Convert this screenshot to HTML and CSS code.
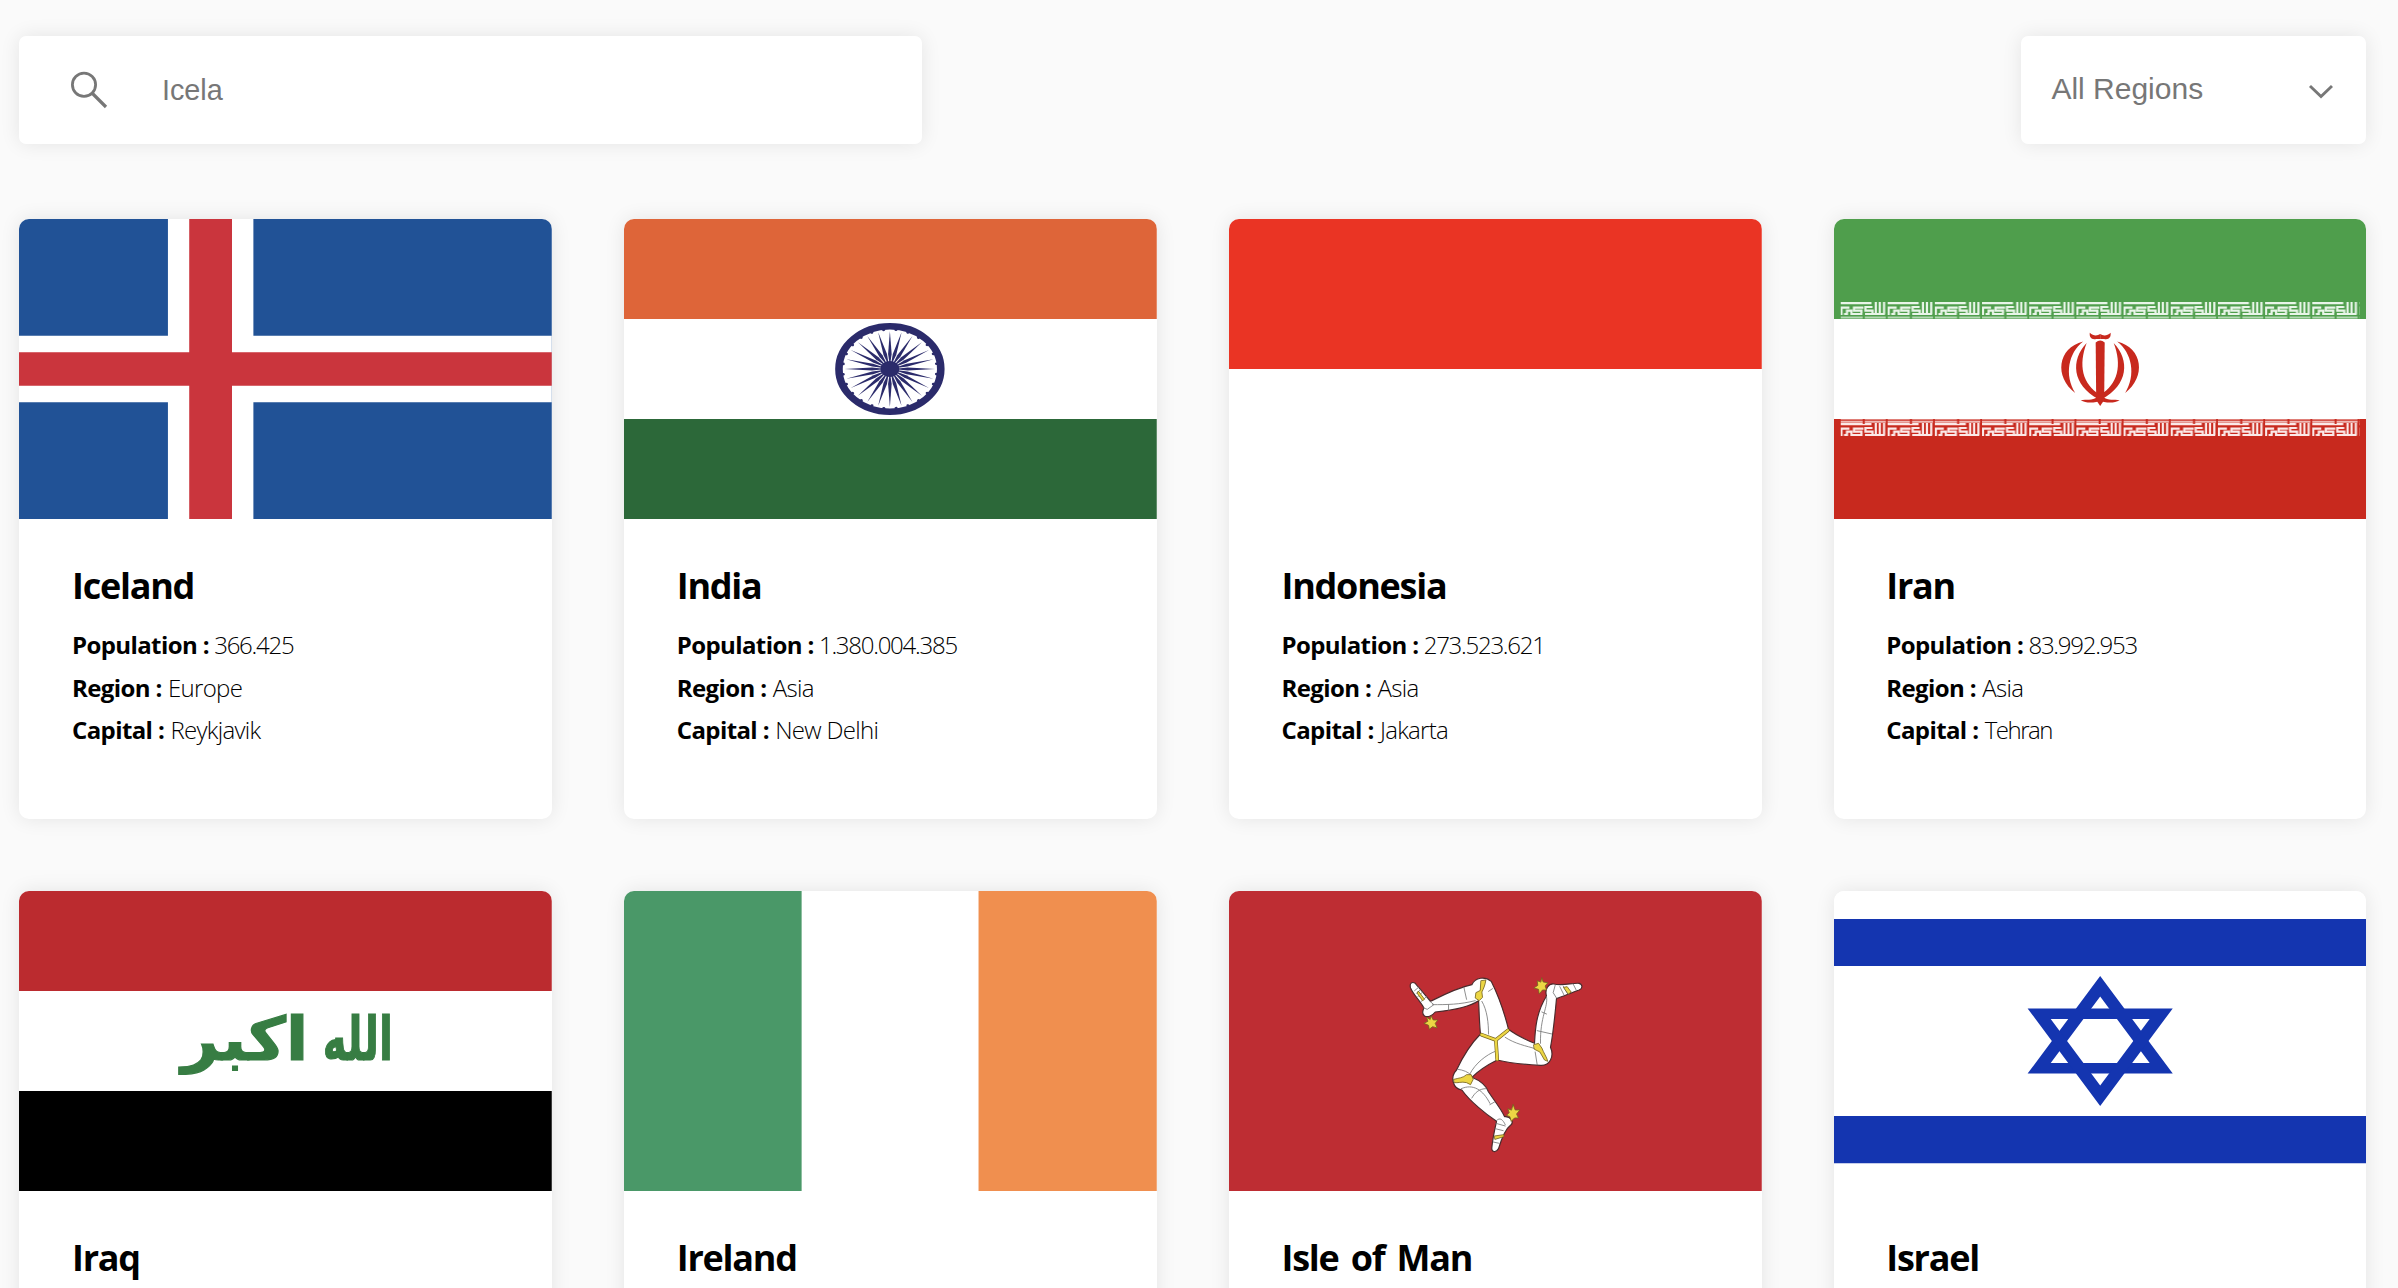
FILE: index.html
```html
<!DOCTYPE html>
<html lang="en">
<head>
<meta charset="utf-8">
<title>Countries</title>
<link rel="stylesheet" href="styles.css">
</head>
<body>
<main class="page">
  <div class="toolbar">
    <label class="search">
      <svg class="search-icon" viewBox="0 0 38 38" width="38" height="38" fill="none" stroke="#777" stroke-width="2.8"><circle cx="14" cy="13.7" r="11.6"/><path d="M22 22 36 36" stroke-width="3.2"/></svg>
      <input class="search-input" type="text" value="Icela">
    </label>
    <div class="select">
      <span class="select-label">All Regions</span>
      <svg class="chevron" viewBox="0 0 26 16" width="26" height="16" fill="none" stroke="#777" stroke-width="2.9"><path d="M2 2 13 12.5 24 2"/></svg>
    </div>
  </div>

  <div class="grid">
    <article class="card">
      <svg class="flag" viewBox="0 0 533 300" preserveAspectRatio="none">
        <rect width="533" height="300" fill="#215296"/>
        <path fill="#fff" d="M149 0h85.5v300H149zM0 116.7h533v66.6H0z"/>
        <path fill="#ca353d" d="M170.3 0h42.8v300h-42.8zM0 133.3h533v33.4H0z"/>
      </svg>
      <div class="body">
        <h2 class="name">Iceland</h2>
        <p class="meta"><b>Population :</b> <span class="number">366.425</span></p>
        <p class="meta"><b>Region :</b> <span>Europe</span></p>
        <p class="meta"><b>Capital :</b> <span>Reykjavik</span></p>
      </div>
    </article>

    <article class="card">
      <svg class="flag" viewBox="0 0 533 300" preserveAspectRatio="none">
        <rect width="533" height="300" fill="#fff"/>
        <rect width="533" height="100" fill="#de6539"/>
        <rect y="200" width="533" height="100" fill="#2c6839"/>
        <defs>
          <g id="spoke"><path d="M0-38 1.5-15 .5-7H-.5L-1.5-15z"/><circle cx="5.1" cy="-39.2" r="1.3"/></g>
          <g id="spokes6"><use href="#spoke"/><use href="#spoke" transform="rotate(15)"/><use href="#spoke" transform="rotate(30)"/><use href="#spoke" transform="rotate(45)"/><use href="#spoke" transform="rotate(60)"/><use href="#spoke" transform="rotate(75)"/></g>
        </defs>
        <g transform="translate(266 150) scale(1.19 1)" fill="#2b2b6b">
          <circle r="42.8" fill="none" stroke="#2b2b6b" stroke-width="6.4"/>
          <circle r="8"/>
          <use href="#spokes6"/><use href="#spokes6" transform="rotate(90)"/><use href="#spokes6" transform="rotate(180)"/><use href="#spokes6" transform="rotate(270)"/>
        </g>
      </svg>
      <div class="body">
        <h2 class="name">India</h2>
        <p class="meta"><b>Population :</b> <span class="number">1.380.004.385</span></p>
        <p class="meta"><b>Region :</b> <span>Asia</span></p>
        <p class="meta"><b>Capital :</b> <span>New Delhi</span></p>
      </div>
    </article>

    <article class="card">
      <svg class="flag" viewBox="0 0 533 300" preserveAspectRatio="none">
        <rect width="533" height="300" fill="#fff"/>
        <rect width="533" height="150" fill="#ea3424"/>
      </svg>
      <div class="body">
        <h2 class="name">Indonesia</h2>
        <p class="meta"><b>Population :</b> <span class="number">273.523.621</span></p>
        <p class="meta"><b>Region :</b> <span>Asia</span></p>
        <p class="meta"><b>Capital :</b> <span>Jakarta</span></p>
      </div>
    </article>

    <article class="card">
      <svg class="flag" viewBox="0 0 533 300" preserveAspectRatio="none">
        <defs>
          <g id="band" fill="none" stroke-width="2.2">
            <path d="M0 1.1H31M1 13V5.6H9M3.5 12H6M6.5 13V8.6H11V12H21V8.6H13.5V5.6H23M24.5 12H32V8.6H25V5H32M35.3 0V12M39.3 0V12M43.6 0V12M30 12H44.5"/>
          </g>
          <pattern id="bandGreen" width="47.2" height="17" patternUnits="userSpaceOnUse" patternTransform="translate(6.5 83)">
            <use href="#band" stroke="#e9f5e9"/>
            <path d="M0 15.6H47.2" stroke="#b4d8b3" stroke-width="2"/>
            <path d="M23.3 11V17M46.4 0V17" stroke="#4f9e4c" stroke-width="2"/>
          </pattern>
          <pattern id="bandRed" width="47.2" height="17" patternUnits="userSpaceOnUse" patternTransform="translate(6.5 200)">
            <path d="M0 .8H47.2" stroke="#df7f78" stroke-width="1.4"/>
            <path d="M0 2.9H47.2" stroke="#efb9b5" stroke-width="1.8"/>
            <use href="#band" y="4" stroke="#fbe9e8"/>
            <path d="M23.3 0V5M46.4 0V17" stroke="#c8291e" stroke-width="2"/>
          </pattern>
        </defs>
        <rect width="533" height="300" fill="#fff"/>
        <rect width="533" height="100" fill="#4f9e4c"/>
        <rect y="200" width="533" height="100" fill="#c8291e"/>
        <rect x="6.5" y="83" width="519.2" height="17" fill="url(#bandGreen)"/>
        <rect x="6.5" y="200" width="519.2" height="17" fill="url(#bandRed)"/>
        <g transform="translate(266.3 0)" fill="#c8291e">
          <g id="crescents">
            <path d="M-17 122.5C-43 129-46 158-25 174-36 156-32 134-17 122.5z"/>
            <path d="M-13.5 124C-30 141-28 166-2 180L0 176C-18 165-22 146-13.5 124z"/>
            <path d="M-10.4 113.8C-7 117-3 117 0 115V120H-4C-9 121-11 118-10.4 113.8z"/>
            <path d="M-19.5 181.3C-14 180-8 182-3 178L0 182-4 183C-9 184-15 184-19.5 181.3z"/>
          </g>
          <use href="#crescents" transform="scale(-1 1)"/>
          <path d="M-4.5 123.5Q0 119.5 4.5 123.5L4 181 0 187-4 181z"/>
        </g>
      </svg>
      <div class="body">
        <h2 class="name">Iran</h2>
        <p class="meta"><b>Population :</b> <span class="number">83.992.953</span></p>
        <p class="meta"><b>Region :</b> <span>Asia</span></p>
        <p class="meta"><b>Capital :</b> <span class="tight">Tehran</span></p>
      </div>
    </article>

    <article class="card">
      <svg class="flag" viewBox="0 0 533 300" preserveAspectRatio="none">
        <rect width="533" height="300" fill="#fff"/>
        <rect width="533" height="100" fill="#bb2b2f"/>
        <rect y="200" width="533" height="100" fill="#000"/>
        <g class="takbir">
          <text x="339" y="169" textLength="70" lengthAdjust="spacingAndGlyphs">الله</text>
          <text x="226" y="169" textLength="127" lengthAdjust="spacingAndGlyphs">اكبر</text>
        </g>
      </svg>
      <div class="body">
        <h2 class="name">Iraq</h2>
      </div>
    </article>

    <article class="card">
      <svg class="flag" viewBox="0 0 533 300" preserveAspectRatio="none">
        <rect width="533" height="300" fill="#fff"/>
        <rect width="177.7" height="300" fill="#4a9868"/>
        <rect x="354.7" width="178.3" height="300" fill="#f08f4f"/>
      </svg>
      <div class="body">
        <h2 class="name">Ireland</h2>
      </div>
    </article>

    <article class="card">
      <svg class="flag" viewBox="0 0 533 300" preserveAspectRatio="none">
        <rect width="533" height="300" fill="#be2d33"/>
        <g transform="translate(161 69) scale(.3333)" stroke-linejoin="round" stroke-linecap="round">
          <g fill="#fff" stroke="#4a2a2c" stroke-width="3.5">
            <path d="M318 240 272 222C268 190 268 150 266 122 240 140 190 150 136 156 128 166 114 174 104 168 96 162 98 152 102 144 90 122 70 104 62 84 58 70 66 64 76 70 92 88 108 108 122 124 150 110 200 84 246 74 256 52 286 48 304 64 322 100 344 160 356 208z"/>
            <path d="M318 240 356 208C376 224 410 240 434 250 436 210 438 160 470 108 464 88 476 70 492 72 520 78 548 68 568 70 580 74 578 86 568 90 544 98 524 108 500 116 496 160 490 220 482 262 494 290 480 318 452 316 410 314 360 310 322 300z"/>
            <path d="M318 240 322 300C290 316 262 336 246 352 276 364 290 380 296 396 312 420 336 450 344 470 362 468 374 486 362 496 348 506 334 540 326 566 318 580 304 576 306 562 308 540 314 510 320 484 290 464 240 424 216 390 188 386 180 350 200 330 216 296 244 250 272 222z"/>
          </g>
          <g fill="none" stroke="#777" stroke-width="2.5">
            <path d="M276 124C292 150 296 190 296 222M296 94 308 86M222 82 230 118M128 134C170 134 210 134 256 122M176 134V150M120 124 132 134 112 148 102 144M84 110 98 96M94 124 110 110M74 92 86 82M80 100 90 90"/>
            <path d="M346 232C376 252 410 258 436 266M436 276 442 314M442 212 486 222M470 110C476 140 450 170 452 250M456 156 470 162M496 76 490 98 500 114M510 80 522 104M520 78 534 102M550 72 560 92"/>
            <path d="M316 274C290 284 256 310 240 342M204 328C220 330 236 336 244 346M246 414C256 396 270 386 288 386M214 386C250 370 280 390 300 430M300 434 314 426M320 482C330 470 340 480 346 494M318 490 346 498M316 506 340 512M310 546 328 550"/>
          </g>
          <path d="M275 224 318 240 354 211M318 240 322 298" fill="none" stroke="#76641f" stroke-width="11"/>
          <path d="M275 224 318 240 354 211M318 240 322 298" fill="none" stroke="#ecd644" stroke-width="7"/>
          <g fill="#ecd644" stroke="#76641f" stroke-width="2.5">
            <path d="M274 62 288 60C286 76 280 88 276 96L278 112 268 122 256 114 258 98 270 92z"/>
            <path d="M432 254 446 250 456 264C462 280 470 290 474 304L464 300 450 276 434 268z"/>
            <path d="M192 358C206 354 220 354 230 344L244 344 250 358 242 374 230 368C214 364 204 370 194 368z"/>
            <path d="M86 94 104 118 98 122 82 100zM522 82 532 80 544 96 536 102zM314 528 342 524V530L316 538z"/>
            <path d="M124 168 130 180 144 180 136 190 142 204 128 200 118 208 116 196 102 190 114 184 110 172 120 178z"/>
            <path d="M456 54 460 66 474 68 466 78 470 90 458 90 448 102 446 88 432 84 444 76 442 62 452 66z"/>
            <path d="M370 434 376 450 390 450 380 462 386 474 374 474 364 484 360 470 350 466 358 458 354 446 364 450z"/>
          </g>
        </g>
      </svg>
      <div class="body">
        <h2 class="name">Isle of Man</h2>
      </div>
    </article>

    <article class="card">
      <svg class="flag" viewBox="0 0 533 300" preserveAspectRatio="none">
        <rect width="533" height="300" fill="#fff"/>
        <path fill="#1435b0" d="M0 28h533v47H0zM0 225h533v47.3H0z"/>
        <g transform="translate(266.3 150)" fill="#1435b0" fill-rule="evenodd">
          <path d="M0-65 72.6 32.6H-72.6zM0-44.5-49.5 22H49.5z"/>
          <path d="M0 65 72.6-32.6H-72.6zM0 44.5-49.5-22H49.5z"/>
        </g>
      </svg>
      <div class="body">
        <h2 class="name">Israel</h2>
      </div>
    </article>
  </div>
</main>
</body>
</html>
```
FILE: styles.css
```css
* {
  box-sizing: border-box;
}

body {
  margin: 0;
  background: #fafafa;
  color: #000;
  font-family: "Open Sans", sans-serif;
}

.page {
  height: 1288px;
  overflow: hidden;
  padding: 36px 31.6px 0 19.4px;
}

.toolbar {
  display: flex;
  justify-content: space-between;
  margin-bottom: 75px;
}

.search,
.select {
  display: flex;
  align-items: center;
  height: 108px;
  background: #fff;
  border-radius: 7px;
  box-shadow: 0 0 20px rgba(0, 0, 0, 0.09);
  color: #777;
  font-family: "Liberation Sans", Arial, sans-serif;
}

.search {
  width: 903px;
  padding-left: 51px;
  gap: 53.5px;
}

.search-input {
  flex: 1;
  padding: 0;
  border: 0;
  outline: 0;
  background: none;
  color: inherit;
  font: 28.8px "Liberation Sans", Arial, sans-serif;
}

.select {
  width: 345px;
  justify-content: space-between;
  padding: 0 32px 0 30px;
  font-size: 30px;
}

.select-label {
  margin-top: -3px;
}

.chevron {
  margin-top: 3px;
}

.grid {
  display: grid;
  grid-template-columns: repeat(4, 1fr);
  gap: 72px;
}

.card {
  height: 600px;
  overflow: hidden;
  background: #fff;
  border-radius: 10px;
  box-shadow: 0 0 20px rgba(0, 0, 0, 0.09);
}

.flag {
  display: block;
  width: 100%;
  height: 300px;
}

.takbir {
  fill: #377d43;
  stroke: #377d43;
  stroke-width: 1.2px;
  font: bold 60px "DejaVu Sans", sans-serif;
  text-anchor: middle;
}

.body {
  padding: 43px 52.6px 0;
}

.name {
  margin: 0 0 14px;
  font-size: 36px;
  font-weight: 700;
  line-height: 48px;
  letter-spacing: -1.25px;
  word-spacing: 4px;
}

.meta {
  margin: 0;
  font-size: 24px;
  font-weight: 300;
  line-height: 42.5px;
}

.meta b {
  font-weight: 700;
  letter-spacing: -0.6px;
}

.meta span {
  letter-spacing: -0.7px;
}

.meta .number {
  margin-left: -1px;
  letter-spacing: -1.25px;
}

.meta .tight {
  letter-spacing: -1.5px;
}
```
